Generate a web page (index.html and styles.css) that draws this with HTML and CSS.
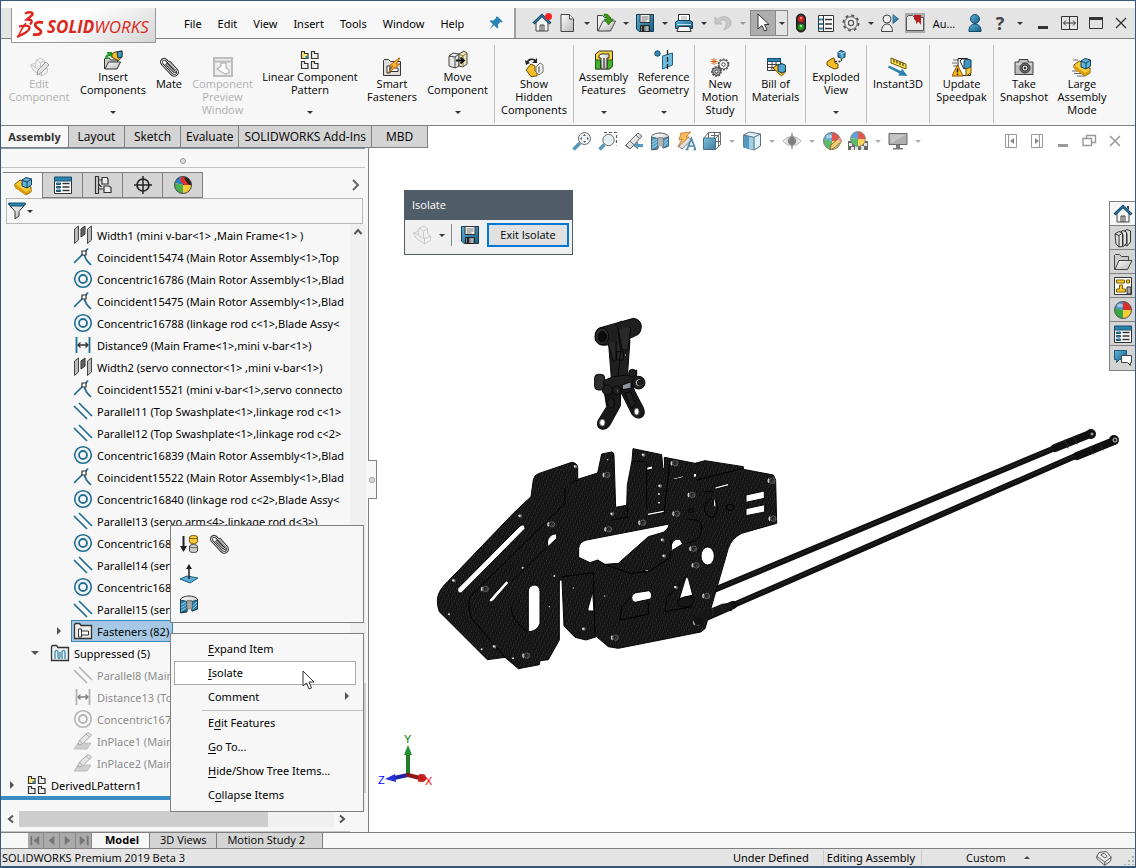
FILE: index.html
```html
<!DOCTYPE html>
<html lang="en">
<head>
    <meta charset="UTF-8">
    <meta name="viewport" content="width=device-width, initial-scale=1.0">
    <title>SOLIDWORKS Premium 2019 Beta 3</title>
    <link rel="stylesheet" href="styles.css">
</head>
<body>
    <!-- Shared icons -->
    <svg class="icon-defs" aria-hidden="true">
        <defs>
            <linearGradient id="blueGrad" x1="0" y1="0" x2="1" y2="1"><stop offset="0" stop-color="#5db4dc"/><stop offset="1" stop-color="#135b80"/></linearGradient>
            <linearGradient id="greyGrad" x1="0" y1="0" x2="1" y2="1"><stop offset="0" stop-color="#fff"/><stop offset="1" stop-color="#b5b5b5"/></linearGradient>
        </defs>
        <symbol id="home" viewBox="0 0 20 20"><path d="M4 9v9h12V9l-6-6z" fill="#f4f4f4" stroke="#444"/><path d="M8 18v-6h4v6M10 12v6" fill="none" stroke="#444"/><path d="M14 2h2v4l-2-2z" fill="#444"/><path d="M1.500 10.500 10 2.500l8.500 8" fill="none" stroke="#154a6e" stroke-width="3"/><path d="M2 10 10 2.600l8 7.400" fill="none" stroke="#348bb5" stroke-width="1"/></symbol>
        <symbol id="doc" viewBox="0 0 20 20"><path d="M4 1.500h8.500l4 4.500v12.500H4z" fill="url(#greyGrad)" stroke="#444"/><path d="M12.500 1.500V6h4" fill="#fff" stroke="#444"/></symbol>
        <symbol id="folder" viewBox="0 0 20 20"><path d="M1.500 17.500v-14l1-1h4l2 2h7v4" fill="#ccc" stroke="#444"/><path d="M2 17.500 6 8.500h13l-4.500 9z" fill="url(#greyGrad)" stroke="#444"/></symbol>
        <symbol id="open" viewBox="0 0 20 20"><path d="M1.500 18V2.500h5l2 2h6V9" fill="#eee" stroke="#444"/><path d="M2 18 7 8h12.500l-5 10z" fill="url(#greyGrad)" stroke="#444"/><path d="M8 1c5 0 6 2 6 5h3.500L12.500 12 8 6h3c0-2-1-3-3-3z" fill="#3a9a12" stroke="#1e6a06" stroke-width=".6"/></symbol>
        <symbol id="save" viewBox="0 0 20 20"><path d="M1.500 1.500h17v17H4l-2.500-2.500z" fill="url(#blueGrad)" stroke="#173c52"/><path d="M5 1.500h10v8H5z" fill="#f5f5f5" stroke="#333"/><path d="M6.500 4h7M6.500 6h7M6.500 8h5" stroke="#777"/><path d="M5.500 12.500h9v6h-9z" fill="#7f8990" stroke="#222"/><path d="M8 13v5" stroke="#222" stroke-width="2"/><path d="M12 13v5" stroke="#ddd"/></symbol>
        <symbol id="print" viewBox="0 0 20 20"><path d="M4.500 8V1.500h11V8" fill="#fff" stroke="#333"/><path d="M7 4h6M7 6h6" stroke="#aaa"/><path d="M1.500 9 4 7.500h12L18.500 9v6.500h-17z" fill="url(#blueGrad)" stroke="#143f57"/><path d="M3 11.500h14" stroke="#bde4f5"/><path d="M4.500 13.500h11l1.500 5H3z" fill="#f4f4f4" stroke="#333"/></symbol>
        <symbol id="undo" viewBox="0 0 20 20"><path d="M2 4v7h7L6.500 8.500c4-3 7-1 7 2 0 2-1 4-3 6.500 6-2 8-5 7.500-8C17 3 9 2 4.500 6.500z" fill="#c8c8c8" stroke="#aaa" stroke-width=".7"/></symbol>
        <symbol id="cursor" viewBox="0 0 20 20"><path d="M5 1v15l4-3.500L11.500 18l2.500-1-2.500-5.500H16z" fill="#fff" stroke="#333"/></symbol>
        <symbol id="traffic" viewBox="0 0 20 20"><rect x="5.500" y="1" width="9" height="18" rx="4.500" fill="#3a3030" stroke="#111"/><circle cx="10" cy="6" r="3" fill="#d8201c"/><circle cx="10" cy="14" r="3" fill="#1fa01f"/><circle cx="10" cy="5" r="1" fill="#ffb0a8"/><circle cx="10" cy="13" r="1" fill="#b6ffb0"/></symbol>
        <symbol id="list" viewBox="0 0 20 20"><path d="M2.500 2.500h15v16h-15z" fill="#fff" stroke="#333"/><path d="M7.500 2.500v16" stroke="#333"/><path d="M3 5.500h4v2H3zM3 10h4v2H3zM3 14.500h4v2H3z" fill="#2c83ad"/><path d="M9 6.500h7M9 11h7M9 15.500h7" stroke="#333" stroke-width="1.300"/></symbol>
        <symbol id="listhead" viewBox="0 0 20 20"><path d="M1.500 2.500h17v16h-17z" fill="#fff" stroke="#333"/><path d="M1.500 2h17v4h-17z" fill="#2c83ad" stroke="#15506f"/><path d="M3.500 8h4v1.500h-4zM3.500 11.500h4V13h-4zM3.500 15h4v1.500h-4z" fill="#4aa0c8" stroke="#15506f"/><path d="M9.500 8.500h7M9.500 12h7M9.500 15.500h7" stroke="#333" stroke-width="1.300"/></symbol>
        <symbol id="gear" viewBox="0 0 20 20"><circle cx="10" cy="10" r="7.600" fill="none" stroke="#555" stroke-width="1.800" stroke-dasharray="3 2.970"/><circle cx="10" cy="10" r="6.300" fill="#eee" stroke="#555"/><circle cx="10" cy="10" r="2.600" fill="none" stroke="#555" stroke-width="1.200"/></symbol>
        <symbol id="persongo" viewBox="0 0 20 20"><circle cx="7" cy="6" r="4" fill="#eee" stroke="#444"/><path d="M1.500 18.500c0-10 11-10 11 0z" fill="#eee" stroke="#444"/><path d="M13 1.500v9l5.500-4.500z" fill="url(#blueGrad)" stroke="#134b69" stroke-width=".7"/></symbol>
        <symbol id="flag" viewBox="0 0 20 20"><path d="M0 0h20v20H0z" fill="#aaa"/><path d="M1.500 17.500v-13l2-2h4l2 2h9v13z" fill="#e9e9e9" stroke="#555"/><path d="M9 2h7v10l-2.500-3.500L11 11V8L9 6z" fill="#b21c1c"/></symbol>
        <symbol id="person" viewBox="0 0 20 20"><circle cx="10" cy="6" r="4.500" fill="url(#blueGrad)" stroke="#134b69"/><path d="M4 18.500c-1-10 13-10 12 0z" fill="url(#blueGrad)" stroke="#134b69"/></symbol>
        <symbol id="pin" viewBox="0 0 20 20"><path d="m12 2 6.500 6.500-1.500.8-1.600-.4-3 3.400.4 3.600-1.300.9-4-4L1.500 18.500l4.600-6.800-3.900-3.900 1-1.300 3.500.4 3.400-3-.4-1.600z" fill="#2a83b4"/></symbol>
        <symbol id="part" viewBox="0 0 20 20"><path d="m2 8 5-4 4 1 2 5 5 1v5l-5 3-11-8z" fill="#f9cd3a" stroke="#7a5400"/><path d="m2 8 11 8v3L2 12zM13 16l5-3v3l-5 3z" fill="#dc9b0b"/><path d="m9 4 4-2.500L18.500 3v6L14 12 9 10z" fill="#63b5da" stroke="#123f58"/><path d="M9 4.200 14 6v6M14 6l4.500-3" fill="none" stroke="#123f58"/></symbol>
        <symbol id="ghostpart" viewBox="0 0 20 20"><path d="m1.500 8 5-2 1-3 4-2 4 2.500v5l3 3v4l-6 3.500L4 13z" fill="#f0f0f0" stroke="#cacaca"/><path d="m7.500 3 4 3v5l1 3v5M11.500 6l4-2.500M1.500 8l3 1 8 5 6-3M6.500 6v5" fill="none" stroke="#cacaca"/></symbol>
        <symbol id="editpart" viewBox="0 0 20 20"><use href="#ghostpart"/><path d="m8 18 1-5 8-8 3 3-8 8z" fill="#e3e3e3" stroke="#9a9a9a"/></symbol>
        <symbol id="insert" viewBox="0 0 20 20"><path d="m9 4 3-2 7-1v6l-4 4-6-4z" fill="#f3bb27" stroke="#5e4a10"/><path d="m14 2 5-1v6l-4 1z" fill="#3a97c6" stroke="#12384e"/><path d="M1.500 19V9l1-1h4l1 2h7v3" fill="#ccc" stroke="#333"/><path d="m2 19 3.500-7h12L14 19z" fill="url(#greyGrad)" stroke="#333"/><path d="M2 9c0-3 1-4 3-5L3.500 2H9v6L7 6C5 6 4 7 4 9z" fill="#1f9323"/></symbol>
        <symbol id="clip" viewBox="0 0 20 20"><path d="M7 6.500 14.500 14c1.500 1.500 3 0 1.500-1.500L7.500 3.500C4.500 0.500 0.500 4 3.500 7.500l9 9.500c3.500 3.500 8-.5 5-4.500L10 4.500" fill="none" stroke="#333" stroke-width="2.600"/><path d="M7 6.500 14.500 14c1.500 1.500 3 0 1.500-1.500L7.500 3.500C4.500 0.500 0.500 4 3.500 7.500l9 9.500c3.500 3.500 8-.5 5-4.500L10 4.500" fill="none" stroke="#eee" stroke-width="1"/></symbol>
        <symbol id="preview" viewBox="0 0 20 20"><path d="M1 1h18v18H1z" fill="#eee" stroke="#bdbdbd" stroke-width="2"/><path d="M1 4.500h18" stroke="#bdbdbd" stroke-width="2"/><path d="m4 12 4-3V6h5v5l3 2v3l-4 1z" fill="#fff" stroke="#bbb" stroke-width="1.300"/></symbol>
        <symbol id="pattern" viewBox="0 0 20 20"><g stroke="#333" stroke-width="1.200"><path d="M1.500 1.500h3v2h3.500v5H1.500z" fill="#ffe27a"/><g fill="#eee"><path d="M11.500 1.500h3v2H18v5h-6.500zM1.500 11.500h3v2h3.500v5H1.500zM11.500 11.500h3v2H18v5h-6.500z"/></g></g><path d="M5.500 6H8v2.500H5.500z" fill="#2c83ad"/></symbol>
        <symbol id="smart" viewBox="0 0 20 20"><path d="M1.500 18.500V3.500l1-1h4l2 2h10v14z" fill="#ddd" stroke="#333"/><path d="M5 9h3v7H5zM8 11h8v3.500H8z" fill="#fff" stroke="#333"/><path d="M17 1 7 9h4l-5 7L18 7h-4l4-6z" fill="#f9b32d" stroke="#a64d05" stroke-width=".8"/></symbol>
        <symbol id="move" viewBox="0 0 20 20"><path d="m1 6 4-3 6 1v12l-4 2-6-2z" fill="#e5e5e5" stroke="#444"/><path d="m1 6 6 1v11M7 7l4-3" fill="none" stroke="#444"/><path d="m11 4 5-3 3 2v11l-4 3-4-1z" fill="#ece3b8" stroke="#444"/><path d="m11 4 4 2v10M15 6l4-3" fill="none" stroke="#8a7432"/><path d="M8 10.500h7M12.500 7.500l3.500 3-3.500 3" fill="none" stroke="#111" stroke-width="1.800"/></symbol>
        <symbol id="show" viewBox="0 0 20 20"><path d="m2 13 5-6 4 2v5l2 1v4l-6 .5z" fill="#f5bd28" stroke="#6f4c00"/><path d="m12 10 4-4 3 2v7l-4 3-3-3z" fill="#eee" stroke="#777"/><path d="m14 10 2-1v6l-2 1z" fill="#999"/><path d="M3 6c1-4 6-5 9-2" fill="none" stroke="#222" stroke-width="1.600"/><path d="m1 3 1 5 4-2zM13 1v5H8z" fill="#222"/></symbol>
        <symbol id="asmfeat" viewBox="0 0 20 20"><path d="m1.500 4 4-3h13v15l-3 3h-14z" fill="#f6cf3b" stroke="#333"/><path d="M1.500 10h5v9h-5zM13 10h5.500v6l-3 3H13z" fill="#3fb52c" stroke="#265c1b"/><path d="M5 5.500 7 4h8v4h-2v11H7V8H5z" fill="url(#greyGrad)" stroke="#333"/><path d="M10 8v11" stroke="#777" stroke-width="2"/></symbol>
        <symbol id="refgeo" viewBox="0 0 20 20"><circle cx="3.500" cy="3.500" r="2.700" fill="#348bb5" stroke="#144c6b"/><path d="m8.500 6 10-3v12l-10 4z" fill="#70bbdc" stroke="#1b6287"/><path d="M13.500 0v20" stroke="#222" stroke-width="1.300" stroke-dasharray="5 2"/></symbol>
        <symbol id="motion" viewBox="0 0 20 20"><circle cx="13.500" cy="7.500" r="5.200" fill="none" stroke="#555" stroke-width="1.500" stroke-dasharray="2 1.270"/><circle cx="13.500" cy="7.500" r="4.500" fill="#eee" stroke="#555"/><circle cx="13.500" cy="7.500" r="1.700" fill="#fff" stroke="#555"/><circle cx="6.500" cy="14.500" r="4.600" fill="none" stroke="#444" stroke-width="1.500" stroke-dasharray="2 1.200"/><circle cx="6.500" cy="14.500" r="4" fill="#aaa" stroke="#444"/><circle cx="6.500" cy="14.500" r="1.500" fill="#fff" stroke="#444"/><path d="M4 1v7M.5 4.500h7M1.500 2l5 5M6.500 2l-5 5" stroke="#d8681a"/></symbol>
        <symbol id="bom" viewBox="0 0 20 20"><path d="M1.500 1.500h13v12h-13z" fill="#fff" stroke="#333"/><path d="M1.500 1.500h13v3h-13z" fill="#2c83ad" stroke="#15506f"/><path d="M2 7.500h12M2 10.500h12M6 4.500v9M10 4.500v9" stroke="#444"/><path d="m7 11 4-3 5-1 3.500 1.500V15l-4 4z" fill="#f5bd28" stroke="#6f4c00"/><path d="m12 8 4-1.500 3.500 2V14L16 16l-4-2z" fill="#4da6d0" stroke="#123f58"/></symbol>
        <symbol id="explode" viewBox="0 0 20 20"><path d="m1 12 4-3 3-1 1 5 3 1v4l-4 1-7-4z" fill="#f5bd28" stroke="#6f4c00"/><path d="m12 2 3-1.500L19 2v5l-3 1.500L12 7z" fill="#348bb5" stroke="#123f58"/><path d="m12 2 4 1.500v5M16 3.500 19 2" fill="none" stroke="#b9e3f7"/><path d="M9 11.500h6.500V8" fill="none" stroke="#222" stroke-width="1.300" stroke-dasharray="2 1.500"/></symbol>
        <symbol id="instant" viewBox="0 0 20 20"><path d="m3 1 15 6v5L3 6z" fill="#fae04a" stroke="#705c0c"/><path d="M6 2.500v3M9 3.500v3M12 5v3M15 6v3" stroke="#222"/><path d="M1 8.500 13 14l1-2.500 5.500 7.500-9.500-.500 1.500-2L0 10.500z" fill="#2c83ad"/></symbol>
        <symbol id="update" viewBox="0 0 20 20"><path d="M1 3h5M0 6h5M1 9h4" stroke="#666"/><path d="M6 1.500h9l3.500 2v15h-9L6 16z" fill="#fff" stroke="#222"/><path d="m8 4 2-2h4v7l-2 3z" fill="#fff" stroke="#222"/><path d="m12 4 3-2 4 1v7l-5 2-2-1z" fill="#3f96c0" stroke="#123f58"/><path d="m14 12 5-2v6l-5 3z" fill="#f3ce49" stroke="#6f4c00"/><path d="m5.500 8 5.500 11H0z" fill="#ffc21a" stroke="#8d4a00"/><path d="M5.500 11.500v4M5.500 16.500V18" stroke="#222" stroke-width="1.600"/></symbol>
        <symbol id="camera" viewBox="0 0 20 20"><path d="M1 5h4V2.500h9V5h5v12.500H1z" fill="#bdbdbd" stroke="#444"/><path d="M2 7h16" stroke="#eee"/><circle cx="11" cy="11" r="5" fill="#777" stroke="#333"/><circle cx="11" cy="11" r="3" fill="#eee" stroke="#222"/><circle cx="11" cy="11" r="1.300" fill="#333"/></symbol>
        <symbol id="large" viewBox="0 0 20 20"><path d="M0 14h8M2 16.500h8M5 19h8M1 3h5" stroke="#666"/><use href="#part"/></symbol>
        <symbol id="zoomfit" viewBox="0 0 20 20"><path d="m1.500 18.500 6.500-6.500" stroke="#2f7fa8" stroke-width="3.500"/><circle cx="12.500" cy="7.500" r="6" fill="#edf3f6" stroke="#444"/><path d="m12.500 3-1.500 2h3zM12.500 12 11 10h3zM8 7.500 10 6v3zM17 7.500 15 6v3z" fill="#333"/></symbol>
        <symbol id="zoomarea" viewBox="0 0 20 20"><path d="M6 1.500h12.500v13" fill="none" stroke="#333" stroke-width="1.200" stroke-dasharray="3 2"/><path d="m1.500 18.500 5-5" stroke="#2f7fa8" stroke-width="3.500"/><circle cx="10.500" cy="9" r="5.700" fill="#dde9ef" stroke="#444"/></symbol>
        <symbol id="prevview" viewBox="0 0 20 20"><path d="m1.500 14.500 5-5L14 2l4 3-7 8-5 5z" fill="url(#greyGrad)" stroke="#444"/><path d="m2 14 4 4M6 10l4 4M12 4l3.500 3.500" stroke="#444"/><path d="M19 13v3h-5v2.500l-5-4 5-4V13z" fill="#2c83ad"/></symbol>
        <symbol id="section" viewBox="0 0 20 20"><path d="M1.500 5C5 1 15 1 18.500 5v10L13 17V7H8v11l-6.500 1z" fill="url(#greyGrad)" stroke="#333"/><path d="M1.500 6 8 7.500V17l-6.500 1.500zM13 7.500 18.500 6v9L13 17z" fill="#2c83ad" stroke="#163e54"/><path d="m2 11 5-3M2 14l5.500-3.500M2 17l5.500-3.500M13.500 12l4.500-4M13.500 15l4.500-4" stroke="#8fd0ee"/><path d="M8 7h5v8H8z" fill="#a5a5a5" stroke="#666" stroke-width=".5"/></symbol>
        <symbol id="annot" viewBox="0 0 20 20"><path d="M2 15 12 6l4 3L6 18z" fill="url(#greyGrad)" stroke="#555"/><path d="M15 1 5 2 3 9l3-1-4 8L13 6h-3z" fill="#f7ab2d" stroke="#a64d05" stroke-width=".8"/><path d="m11 18.500 4.500-11 4 11M12.500 15h6M9.500 18.500h3M17.500 18.500h3" fill="none" stroke="#1f6e96" stroke-width="1.700"/></symbol>
        <symbol id="views" viewBox="0 0 20 20"><path d="M6.500 1.500h12V14M6.500 1.500V7M12.500 1.500V7M2 7l4.500-5.500M14 7l4.500-5.500M14 10.500h4.500M14 18l4.500-4.500M9 4.500h7.500v11" fill="none" stroke="#444"/><path d="M1.500 7h12v11.500h-12z" fill="url(#blueGrad)" stroke="#184e69"/></symbol>
        <symbol id="shaded" viewBox="0 0 20 20"><path d="m1.500 4 6-3L18.500 3v12L12 19 1.500 16z" fill="#d9eef8" stroke="#2c4f61"/><path d="m1.500 4 6 1.500v12.500L1.500 16z" fill="#2c83ad"/><path d="m7.500 5.500 5 .8V19l-5-1z" fill="#8bc6e2"/><path d="M1.500 4 12 6.300V19M12 6.300 18.500 3" fill="none" stroke="#2c4f61"/></symbol>
        <symbol id="eye" viewBox="0 0 20 20"><path d="M1 10c4-6 14-6 18 0-4 6-14 6-18 0z" fill="#e0e0e0" stroke="#aaa"/><circle cx="10" cy="10" r="4.300" fill="#666"/><path d="M10 2v16" stroke="#555" stroke-width="1.200"/></symbol>
        <symbol id="ball" viewBox="0 0 20 20"><path d="M10 10V1.500A8.500 8.500 0 0 0 2 8z" fill="#3b8cd0"/><path d="M10 10V1.500A8.500 8.500 0 0 1 18.500 10z" fill="#db2f25"/><path d="M10 10h8.500A8.500 8.500 0 0 1 10 18.500z" fill="#f7cc34"/><path d="M10 10 2 8a8.500 8.500 0 0 0 8 10.500z" fill="#37a746"/><circle cx="10" cy="10" r="8.500" fill="none" stroke="#565656"/><ellipse cx="7" cy="5.500" rx="3" ry="2" fill="#fff" opacity=".5"/></symbol>
        <symbol id="display" viewBox="0 0 20 20"><path d="M10 10 2 8a8.500 8.500 0 0 1 8-6.500z" fill="#2b7fca"/><path d="M10 10V1.500A8.500 8.500 0 0 1 18.500 10z" fill="#222"/><path d="m2 8 8 2 8.500 0A8.500 8.500 0 0 1 11 18.500z" fill="#f7cc34"/><path d="M10 10 2 8a8.500 8.500 0 0 0 8 10.500z" fill="#4caf50"/><circle cx="10" cy="10" r="8.500" fill="none" stroke="#444"/><path d="M8 2c3-1 5 1 6 3l2 5h-5L7 6z" fill="#d8342a"/><path d="M11 3c3 0 5 2 6 5l-2 1z" fill="#222"/></symbol>
        <symbol id="ballpencil" viewBox="0 0 20 20"><use href="#ball"/><path d="m8 19 1-5 8-7 3 3-8 7z" fill="#f3c75a" stroke="#70460a"/><path d="m16 8 1.500-1.500 3 2.500-1.500 2z" fill="#e07c84"/></symbol>
        <symbol id="scene" viewBox="0 0 20 20"><path d="M0 10h20v9H0z" fill="#444"/><path d="M1 12h3v3H1zM7 15h3v4H7zM13 15h3v4h-3zM16 12h3v3h-3zM3 16h3v3H3z" fill="#ddd"/><path d="M10 8V.5A7.500 7.500 0 0 0 2.500 7z" fill="#3b8cd0"/><path d="M10 8V.5A7.500 7.500 0 0 1 17.500 8z" fill="#db2f25"/><path d="M10 8h7.500a7.500 7.500 0 0 1-7.500 7.500z" fill="#f7cc34"/><path d="M10 8 2.500 7A7.500 7.500 0 0 0 10 15.500z" fill="#37a746"/><circle cx="10" cy="8" r="7.500" fill="none" stroke="#565656" stroke-width=".7"/></symbol>
        <symbol id="monitor" viewBox="0 0 20 20"><path d="M1 2.500h18v11H1z" fill="#9a9a9a" stroke="#444"/><path d="M2 3.500h16L3 12.500z" fill="#b9b9b9"/><path d="M8 14h4v3h3v1.500H5V17h3z" fill="#555"/></symbol>
        <symbol id="tree" viewBox="0 0 20 20"><path d="M2.500 1.500v17h3v-17zM5.500 5h4M5.500 14h5M5.500 9l3 3" fill="none" stroke="#333" stroke-width="1.200"/><path d="M9 2.500h5l1 1.500v5H9zM11 11h5l2 1.500v5h-7z" fill="#eee" stroke="#333" stroke-width="1.200"/></symbol>
        <symbol id="target" viewBox="0 0 20 20"><circle cx="10" cy="10" r="6" fill="none" stroke="#222" stroke-width="1.700"/><path d="M10 1v18M1 10h18" stroke="#222" stroke-width="1.500"/></symbol>
        <symbol id="books" viewBox="0 0 20 20"><g fill="#e2e2e2" stroke="#333"><path d="m10 4 4-2.500L17.500 3v11L14 18l-4-2z"/><path d="m6 5 4-2.500L13.500 4v11l-3 3.500L6 16z"/><path d="m2 6 4-2.500L9.500 5v13.500L6 19l-3-3z"/></g><path d="m2 6 4 1.500V19M6 7.500 9.500 5M10 6.500v11M14 5.500V17" fill="none" stroke="#333"/></symbol>
        <symbol id="palette" viewBox="0 0 20 20"><path d="M1.500 1.500h17v17h-17z" fill="#fff" stroke="#333"/><path d="M3.500 4h8v3h-8zM13.500 4h3v3h-3zM6.500 9h3v4h3v3h-9v-3h3z" fill="#ffcc27" stroke="#7a5b05"/><path d="M14 11h4v7h-4z" fill="#aaa" stroke="#333"/></symbol>
        <symbol id="chat" viewBox="0 0 20 20"><path d="M1.500 2.500h12v9h-7l-3 3v-3h-2z" fill="url(#blueGrad)" stroke="#235a76"/><path d="M8.500 7.500h10v7h-1v3l-3-3h-6z" fill="#fff" stroke="#444"/></symbol>
        <symbol id="filter" viewBox="0 0 20 20"><path d="M1.500 3 8 10.500V18l4-3v-4.500L18.500 3z" fill="url(#greyGrad)" stroke="#333"/><path d="M1.500 2h17l-2 3h-13z" fill="#2c83ad" stroke="#15506f"/></symbol>
        <symbol id="width" viewBox="0 0 20 20"><path d="m1.500 4 4-3v14l-4 3.500zM14.500 4l4-3v14l-4 3.500z" fill="#bbb" stroke="#444"/><path d="m8 4 4-3v8l-4 3z" fill="#666" stroke="#333"/></symbol>
        <symbol id="coin" viewBox="0 0 20 20"><path d="M1 16 11 6l4-4.500M11 6c1 6 3 8 7 12" fill="none" stroke="#1f6e96" stroke-width="1.700"/><path d="M9 4h4v4H9z" fill="#fff" stroke="#333" stroke-width="1.200"/></symbol>
        <symbol id="conc" viewBox="0 0 20 20"><circle cx="10" cy="10" r="8.300" fill="none" stroke="currentColor" stroke-width="1.600"/><circle cx="10" cy="10" r="4" fill="none" stroke="currentColor" stroke-width="1.800"/></symbol>
        <symbol id="par" viewBox="0 0 20 20"><path d="m1 5 13 13M6 2l13 13" stroke="currentColor" stroke-width="1.700"/></symbol>
        <symbol id="dist" viewBox="0 0 20 20"><path d="M3.500 2v16M16.500 2v16" stroke="currentColor" stroke-width="1.800"/><path d="M5 10h10M7.500 7.500 5 10l2.500 2.500M12.500 7.500 15 10l-2.500 2.500" fill="none" stroke="#333" stroke-width="1.300"/></symbol>
        <symbol id="inplace" viewBox="0 0 20 20"><path d="m1 18 4-6h13l-4 6z" fill="#b5b5b5" stroke="#999"/><path d="m5 14 1.500-5L15 1.500 18.500 4 9.500 13z" fill="#ddd" stroke="#777"/><path d="m6.500 9 3 4M13 3l3.500 3" stroke="#777"/></symbol>
        <symbol id="fast" viewBox="0 0 20 20"><path d="M1.500 17.500v-14l1-1h4l1.500 2h10.500v13z" fill="#eee" stroke="#333" stroke-width="1.300"/><path d="M5.500 8h3v8h-3zM8.500 10h7v4h-7z" fill="#fff" stroke="#333"/></symbol>
        <symbol id="supp" viewBox="0 0 20 20"><path d="M1.500 17.500v-14l1-1h4l1.500 2h10.500v13z" fill="#eee" stroke="#333" stroke-width="1.300"/><path d="M5 16V9c0-2 3-2 3 0v5c0 2 2 2 2 0M12 16V9c0-2 3-2 3 0v7M10 14V9" fill="none" stroke="#2c83ad" stroke-width="1.200"/></symbol>
        <symbol id="suppress" viewBox="0 0 20 20"><path d="M4.500 2v14" stroke="#222" stroke-width="2"/><path d="M1 12h7l-3.500 6z" fill="#222"/><path d="M10.500 3c1-2 7-2 8 0v5c-1 2-7 2-8 0z" fill="#f7cc34" stroke="#7a5400"/><path d="M10.500 12c1-2 7-2 8 0v5c-1 2-7 2-8 0z" fill="#ccc" stroke="#444"/><path d="M11 4c2 1 5 1 7 0M11 13c2 1 5 1 7 0" fill="none" stroke="#6b5a2a"/></symbol>
        <symbol id="normal" viewBox="0 0 20 20"><path d="m1 15 7-3 11 2-8 5z" fill="#5baed5" stroke="#1c597a"/><path d="M10 3v12" stroke="#222" stroke-width="1.500"/><path d="m10 0 3 5H7z" fill="#222"/></symbol>
        <symbol id="tag" viewBox="0 0 20 20"><path d="m1 8 3-5 9-1 6 7-1 5-7 5L1 11z" fill="#eee" stroke="#333"/><path d="m1 8 10 7 8-6M11 15v4M6 6l4-2 4 4-3 2z" fill="none" stroke="#333"/></symbol>
    </svg>

    <header class="titlebar">
        <a class="brand" href="#" aria-label="SOLIDWORKS">
            <svg class="brand-mark" viewBox="0 0 28 28" fill="none" stroke="#da291c"><path d="M9 2.500C15 0 19 2 15 5l-4 3.500c5 0 6 2 3 5" stroke-width="2.400"/><path d="M10 12C6 17 4 21 2 26" stroke-width="1.600"/><path d="M3 15.500c14-3 15 3-2 10.500" stroke-width="2.300"/><path d="M27 11.500c-9-1.500-10 3-4 6.500 4 3 2 6.500-6 5.500" stroke-width="2.800"/></svg>
            <span class="brand-name"><b>SOLID</b>WORKS</span>
        </a>
        <nav class="menubar" aria-label="Main menu">
            <button>File</button><button>Edit</button><button>View</button><button>Insert</button><button>Tools</button><button>Window</button><button>Help</button>
            <button class="pin" aria-label="Pin menu"><svg class="icon"><use href="#pin"/></svg></button>
        </nav>
        <div class="quickbar">
            <button class="home-button" aria-label="Home"><svg class="icon"><use href="#home"/></svg><i class="dot"></i></button>
            <button aria-label="New"><svg class="icon"><use href="#doc"/></svg></button><button class="drop" aria-label="New options"></button>
            <button aria-label="Open"><svg class="icon"><use href="#open"/></svg></button><button class="drop" aria-label="Open options"></button>
            <button aria-label="Save"><svg class="icon"><use href="#save"/></svg></button><button class="drop" aria-label="Save options"></button>
            <button aria-label="Print"><svg class="icon"><use href="#print"/></svg></button><button class="drop" aria-label="Print options"></button>
            <button aria-label="Undo"><svg class="icon"><use href="#undo"/></svg></button><button class="drop faded" aria-label="Undo options"></button>
            <div class="select-tool"><button aria-label="Select"><svg class="icon"><use href="#cursor"/></svg></button><button class="drop" aria-label="Select options"></button></div>
            <button aria-label="Rebuild"><svg class="icon"><use href="#traffic"/></svg></button>
            <button aria-label="File properties"><svg class="icon"><use href="#list"/></svg></button>
            <button aria-label="Options"><svg class="icon"><use href="#gear"/></svg></button><button class="drop" aria-label="More options"></button>
            <button aria-label="User preview"><svg class="icon"><use href="#persongo"/></svg></button>
            <button aria-label="Bookmark"><svg class="icon"><use href="#flag"/></svg></button>
            <button class="search-text">Au...</button>
            <button aria-label="Login"><svg class="icon"><use href="#person"/></svg></button>
            <button class="help">?</button><button class="drop" aria-label="Help options"></button>
            <div class="window-buttons">
                <button aria-label="Minimize"><svg class="icon" viewBox="0 0 20 20"><path d="M5 14.500h10" stroke="#333" stroke-width="3"/></svg></button>
                <button aria-label="Span displays"><svg class="icon" viewBox="0 0 20 20"><path d="M2.500 3.500h16v13h-16zM10.500 4v12M4.500 10h12M7 7.500 4.500 10 7 12.500M14 7.500l2.500 2.500-2.500 2.500" fill="none" stroke="#333"/></svg></button>
                <button aria-label="Maximize"><svg class="icon" viewBox="0 0 20 20"><path d="M4.500 4.500h13v11h-13z" fill="none" stroke="#333"/><path d="M4 4h14v3H4z" fill="#333"/></svg></button>
                <button aria-label="Close"><svg class="icon" viewBox="0 0 20 20"><path d="m5 5 10 10M15 5 5 15" stroke="#333" stroke-width="1.300"/></svg></button>
            </div>
        </div>
    </header>

    <section class="ribbon" aria-label="Assembly commands">
        <button disabled><svg class="icon"><use href="#editpart"/></svg>Edit<br>Component</button>
        <button class="has-drop"><svg class="icon"><use href="#insert"/></svg>Insert<br>Components</button>
        <button><svg class="icon"><use href="#clip"/></svg>Mate</button>
        <button disabled><svg class="icon"><use href="#preview"/></svg>Component<br>Preview<br>Window</button>
        <button class="has-drop"><svg class="icon"><use href="#pattern"/></svg>Linear Component<br>Pattern</button>
        <button><svg class="icon"><use href="#smart"/></svg>Smart<br>Fasteners</button>
        <button class="has-drop group-end"><svg class="icon"><use href="#move"/></svg>Move<br>Component</button>
        <button class="group-end"><svg class="icon"><use href="#show"/></svg>Show<br>Hidden<br>Components</button>
        <button class="has-drop"><svg class="icon"><use href="#asmfeat"/></svg>Assembly<br>Features</button>
        <button class="has-drop group-end"><svg class="icon"><use href="#refgeo"/></svg>Reference<br>Geometry</button>
        <button class="group-end"><svg class="icon"><use href="#motion"/></svg>New<br>Motion<br>Study</button>
        <button class="group-end"><svg class="icon"><use href="#bom"/></svg>Bill of<br>Materials</button>
        <button class="has-drop group-end"><svg class="icon"><use href="#explode"/></svg>Exploded<br>View</button>
        <button class="group-end"><svg class="icon"><use href="#instant"/></svg>Instant3D</button>
        <button class="group-end"><svg class="icon"><use href="#update"/></svg>Update<br>Speedpak</button>
        <button><svg class="icon"><use href="#camera"/></svg>Take<br>Snapshot</button>
        <button><svg class="icon"><use href="#large"/></svg>Large<br>Assembly<br>Mode</button>
    </section>

    <div class="tab-row">
        <nav class="command-tabs" aria-label="Command tabs">
            <button class="active">Assembly</button><button>Layout</button><button>Sketch</button><button>Evaluate</button><button>SOLIDWORKS Add-Ins</button><button>MBD</button>
        </nav>
        <div class="view-toolbar">
            <button aria-label="Zoom to fit"><svg class="icon"><use href="#zoomfit"/></svg></button>
            <button aria-label="Zoom to area"><svg class="icon"><use href="#zoomarea"/></svg></button>
            <button aria-label="Previous view"><svg class="icon"><use href="#prevview"/></svg></button>
            <button aria-label="Section view"><svg class="icon"><use href="#section"/></svg></button>
            <button aria-label="Dynamic annotation views"><svg class="icon"><use href="#annot"/></svg></button>
            <button aria-label="View orientation"><svg class="icon"><use href="#views"/></svg></button><button class="drop" aria-label="Orientations"></button>
            <button aria-label="Display style"><svg class="icon"><use href="#shaded"/></svg></button><button class="drop" aria-label="Display styles"></button>
            <button aria-label="Hide or show items"><svg class="icon"><use href="#eye"/></svg></button><button class="drop" aria-label="Item types"></button>
            <button aria-label="Edit appearance"><svg class="icon"><use href="#ballpencil"/></svg></button>
            <button aria-label="Apply scene"><svg class="icon"><use href="#scene"/></svg></button><button class="drop" aria-label="Scenes"></button>
            <button aria-label="View settings"><svg class="icon"><use href="#monitor"/></svg></button><button class="drop" aria-label="Settings"></button>
        </div>
        <div class="doc-buttons">
            <button aria-label="Previous pane"><svg class="icon" viewBox="0 0 20 20"><path d="M4.500 3.500h11v13h-11zM7.500 4v12" fill="none" stroke="#999"/><path d="M13 7v6l-4-3z" fill="#888"/></svg></button>
            <button aria-label="Next pane"><svg class="icon" viewBox="0 0 20 20"><path d="M4.500 3.500h11v13h-11zM12.500 4v12" fill="none" stroke="#999"/><path d="M8 7v6l4-3z" fill="#888"/></svg></button>
            <button aria-label="Minimize document"><svg class="icon" viewBox="0 0 20 20"><path d="M5 14.500h10" stroke="#999" stroke-width="3"/></svg></button>
            <button aria-label="Restore document"><svg class="icon" viewBox="0 0 20 20"><path d="M4 7.500h8.500v7H4zM7.500 7V4.500h9v7H13" fill="none" stroke="#999" stroke-width="1.400"/></svg></button>
            <button aria-label="Close document"><svg class="icon" viewBox="0 0 20 20"><path d="m5 5 10 10M15 5 5 15" stroke="#999" stroke-width="1.500"/></svg></button>
        </div>
    </div>

    <main class="workspace">
        <aside class="manager">
            <div class="grip"><i></i></div>
            <nav class="manager-tabs" aria-label="Manager tabs">
                <button class="active" aria-label="Feature tree"><svg class="icon"><use href="#part"/></svg></button>
                <button aria-label="Properties"><svg class="icon"><use href="#listhead"/></svg></button>
                <button aria-label="Configurations"><svg class="icon"><use href="#tree"/></svg></button>
                <button aria-label="DimXpert"><svg class="icon"><use href="#target"/></svg></button>
                <button aria-label="Display manager"><svg class="icon"><use href="#display"/></svg></button>
                <button class="more" aria-label="More tabs"><svg class="icon" viewBox="0 0 20 20"><path d="m8 5 5 5-5 5" fill="none" stroke="#666" stroke-width="2"/></svg></button>
            </nav>
            <div class="filter">
                <button aria-label="Filter"><svg class="icon"><use href="#filter"/></svg></button><button class="drop" aria-label="Filter options"></button>
                <input type="text" aria-label="Filter tree">
            </div>
            <div class="tree-area">
                <ul class="tree">
                    <li><svg class="icon"><use href="#width"/></svg><span>Width1 (mini v-bar&lt;1&gt; ,Main Frame&lt;1&gt; )</span></li>
                    <li><svg class="icon"><use href="#coin"/></svg><span>Coincident15474 (Main Rotor Assembly&lt;1&gt;,Top</span></li>
                    <li><svg class="icon"><use href="#conc"/></svg><span>Concentric16786 (Main Rotor Assembly&lt;1&gt;,Blad</span></li>
                    <li><svg class="icon"><use href="#coin"/></svg><span>Coincident15475 (Main Rotor Assembly&lt;1&gt;,Blad</span></li>
                    <li><svg class="icon"><use href="#conc"/></svg><span>Concentric16788 (linkage rod c&lt;1&gt;,Blade Assy&lt;</span></li>
                    <li><svg class="icon"><use href="#dist"/></svg><span>Distance9 (Main Frame&lt;1&gt;,mini v-bar&lt;1&gt;)</span></li>
                    <li><svg class="icon"><use href="#width"/></svg><span>Width2 (servo connector&lt;1&gt; ,mini v-bar&lt;1&gt;)</span></li>
                    <li><svg class="icon"><use href="#coin"/></svg><span>Coincident15521 (mini v-bar&lt;1&gt;,servo connecto</span></li>
                    <li><svg class="icon"><use href="#par"/></svg><span>Parallel11 (Top Swashplate&lt;1&gt;,linkage rod c&lt;1&gt;</span></li>
                    <li><svg class="icon"><use href="#par"/></svg><span>Parallel12 (Top Swashplate&lt;1&gt;,linkage rod c&lt;2&gt;</span></li>
                    <li><svg class="icon"><use href="#conc"/></svg><span>Concentric16839 (Main Rotor Assembly&lt;1&gt;,Blad</span></li>
                    <li><svg class="icon"><use href="#coin"/></svg><span>Coincident15522 (Main Rotor Assembly&lt;1&gt;,Blad</span></li>
                    <li><svg class="icon"><use href="#conc"/></svg><span>Concentric16840 (linkage rod c&lt;2&gt;,Blade Assy&lt;</span></li>
                    <li><svg class="icon"><use href="#par"/></svg><span>Parallel13 (servo arm&lt;4&gt;,linkage rod d&lt;3&gt;)</span></li>
                    <li><svg class="icon"><use href="#conc"/></svg><span>Concentric168</span></li>
                    <li><svg class="icon"><use href="#par"/></svg><span>Parallel14 (serv</span></li>
                    <li><svg class="icon"><use href="#conc"/></svg><span>Concentric168</span></li>
                    <li><svg class="icon"><use href="#par"/></svg><span>Parallel15 (serv</span></li>
                    <li class="folder-row"><i class="caret"></i><span class="selected"><svg class="icon"><use href="#fast"/></svg>Fasteners (82)</span></li>
                    <li class="level-1"><i class="caret open"></i><svg class="icon"><use href="#supp"/></svg><span>Suppressed (5)</span></li>
                    <li class="off"><svg class="icon"><use href="#par"/></svg><span>Parallel8 (Main</span></li>
                    <li class="off"><svg class="icon"><use href="#dist"/></svg><span>Distance13 (To</span></li>
                    <li class="off"><svg class="icon"><use href="#conc"/></svg><span>Concentric167</span></li>
                    <li class="off"><svg class="icon"><use href="#inplace"/></svg><span>InPlace1 (Main</span></li>
                    <li class="off"><svg class="icon"><use href="#inplace"/></svg><span>InPlace2 (Main</span></li>
                    <li class="level-0"><i class="caret"></i><svg class="icon"><use href="#pattern"/></svg><span>DerivedLPattern1</span></li>
                    <li class="rollback"></li>
                </ul>
                <div class="vscroll">
                    <svg class="scroll-arrow" viewBox="0 0 16 16"><path d="m4.500 10 3.500-4 3.500 4" fill="none" stroke="#555" stroke-width="2"/></svg>
                    <i class="vthumb"></i>
                </div>
            </div>
            <div class="hscroll">
                <svg class="scroll-arrow" viewBox="0 0 16 16"><path d="M10 4.500 6 8l4 3.500" fill="none" stroke="#555" stroke-width="2"/></svg>
                <div class="htrack"><i class="hthumb"></i></div>
                <svg class="scroll-arrow" viewBox="0 0 16 16"><path d="m6 4.500 4 3.500-4 3.500" fill="none" stroke="#555" stroke-width="2"/></svg>
            </div>
            <button class="splitter" aria-label="Collapse panel"><i></i></button>

            <!-- Menus opened on the Fasteners folder -->
            <div class="popup-tools">
                <div><button aria-label="Suppress"><svg class="icon"><use href="#suppress"/></svg></button><button aria-label="Mate"><svg class="icon"><use href="#clip"/></svg></button></div>
                <div><button aria-label="Normal to"><svg class="icon"><use href="#normal"/></svg></button></div>
                <div><button aria-label="Section view"><svg class="icon"><use href="#section"/></svg></button></div>
            </div>
            <div class="context-menu" role="menu">
                <button role="menuitem"><span><u>E</u>xpand Item</span></button>
                <button role="menuitem" class="hover"><span><u>I</u>solate</span></button>
                <button role="menuitem"><span>Comment</span><i class="caret"></i></button>
                <hr>
                <button role="menuitem"><span>E<u>d</u>it Features</span></button>
                <button role="menuitem"><span><u>G</u>o To...</span></button>
                <button role="menuitem"><span><u>H</u>ide/Show Tree Items...</span></button>
                <button role="menuitem"><span>C<u>o</u>llapse Items</span></button>
                <svg class="pointer" viewBox="0 0 14 20"><path d="M1 1v15l3.500-3 2.500 6 2.500-1L7 12h5z" fill="#fff" stroke="#333"/></svg>
            </div>
        </aside>

        <section class="viewport">
            <svg class="model" viewBox="369 148 766 684" role="img" aria-label="Isolated helicopter frame">
                <defs>
                    <pattern id="carbon" width="14" height="18" patternUnits="userSpaceOnUse" patternTransform="rotate(-10)"><rect width="14" height="18" fill="#0b0b0b"/><path d="m1 8 4-7M8 17l4-7" stroke="#353535" stroke-width="3"/><path d="m8 8 4-7M1 17l4-7" stroke="#242424" stroke-width="3"/></pattern>
                    <g id="screw"><circle r="8" fill="#161616" stroke="#8d8985" stroke-width="2"/><path d="M-10-6q-5 7 0 12" fill="none" stroke="#d8d0c9" stroke-width="4"/><circle cx="2" cy="1" r="3" fill="#111" stroke="#aaa"/></g>
                    <g id="bolt"><circle r="5" fill="#777"/><circle cx="-3" cy="-1" r="3" fill="#eee"/></g>
                </defs>
                <!-- tail boom rods -->
                <g stroke="#101010" stroke-linecap="round" fill="none">
                    <path d="M714 590 1055 448M697 621 1080 454" stroke-width="6"/>
                    <path d="M1055 448 1090 434M1077 456 1114 441M699 620 733 605" stroke-width="8"/>
                    <path d="M716 589 1052 449M737 603 1074 456" stroke="#262626" stroke-width="1"/>
                    <path d="m1065 440 3 8m6-11 3 7M1090 447l3 7m7-10 3 6" stroke="#2a2a2a" stroke-width="1"/>
                </g>
                <g transform="translate(430 430) scale(.333333)">
                    <path fill="url(#carbon)" stroke="#050505" stroke-width="3" stroke-linejoin="round" fill-rule="evenodd" d="M22 512C22 485 42 465 60 448L250 250L303 200L310 150Q312 136 325 131L425 97Q441 98 443 112V148L503 129L515 72L545 66Q553 68 552 76L557 232L590 226L592 165L606 92L609 56L695 74L699 115L704 118L703 82L795 100L825 92L940 110V118L1030 135L1037 150L1040 280L935 310Q905 325 895 355L840 545L825 596L812 606L565 655L535 650L500 620L468 630L435 622L402 588L396 450H388V630L355 689L330 692L328 704L265 716L225 682L172 689L28 545Q22 530 22 512Z
                    M83 476L270 288Q284 278 285 296L95 488Q82 492 83 476Z M177 510L229 452L236 459L190 512Q178 520 177 510Z M295 480Q300 465 315 465Q330 468 330 485V580Q322 605 295 605Z M352 336Q356 312 380 311V325L354 350Z M446 355Q448 335 470 330L718 282Q713 305 690 310L655 320L565 400L525 403L503 390L480 398L446 382Z M474 535L488 485L492 543H474Z M605 503Q607 488 625 487L657 482Q670 490 662 507L615 517Q604 514 605 503Z M748 506L768 441L775 445L788 495Z M720 365Q723 322 750 328L758 342Z M813 378a20 27 0 1 0 40 0a20 27 0 1 0-40 0Z M948 195L1003 183V205L948 217Z M948 236L1004 224V246L948 257Z M855 171L896 160V167L855 178Z M730 145L760 137V142L730 150Z M650 112L668 107V117L650 121Z M652 250L704 240V247L652 257Z M790 130H800V140L790 143Z M683 188H691V196H683Z M683 214H691V222H683Z M852 205Q858 207 858 233Q853 228 850 226Z M635 424L658 417L652 425Z"/>
                    <g fill="none" stroke="#000" stroke-width="3">
                        <path d="M405 175V220L120 500Q112 530 125 565L225 682M443 150 420 160M545 270 592 262V226M610 95H650V235M720 90 702 250M800 150 940 115M822 185H850M352 350 245 455M397 440 490 428 495 620M525 403 600 430 655 425 718 385Q730 350 720 330M775 268Q820 265 815 300 812 335 770 340M845 205C812 220 820 260 850 262 870 245 860 220 858 210M570 570 575 530 605 500M570 570 655 553V517M705 545 788 530M705 545 710 505 768 441M242 530Q245 570 290 605"/>
                        <ellipse cx="783" cy="242" rx="7" ry="6"/><ellipse cx="900" cy="232" rx="12" ry="9"/>
                    </g>
                    <ellipse cx="768" cy="515" rx="26" ry="15" transform="rotate(-15 768 515)" fill="#171717" stroke="#000" stroke-width="2"/>
                    <path d="m795 570 35-17 50-20 25-3" fill="none" stroke="#171717" stroke-width="24"/>
                    <path d="M848 535v22M875 527l5 20" stroke="#333" stroke-width="2"/>
                    <use href="#screw" x="532" y="135"/><use href="#screw" x="736" y="100"/><use href="#screw" x="1027" y="152"/><use href="#screw" x="1030" y="266"/><use href="#screw" x="787" y="195"/><use href="#screw" x="741" y="251"/><use href="#screw" x="639" y="278"/><use href="#screw" x="537" y="298"/><use href="#screw" x="366" y="283"/><use href="#screw" x="792" y="356"/><use href="#screw" x="799" y="406"/><use href="#screw" x="831" y="498"/><use href="#screw" x="557" y="623"/><use href="#screw" x="291" y="677"/><use href="#screw" x="167" y="477"/><use href="#screw" x="804" y="578"/>
                    <use href="#bolt" x="437" y="110"/><use href="#bolt" x="641" y="75"/><use href="#bolt" x="691" y="168"/><use href="#bolt" x="547" y="252"/><use href="#bolt" x="271" y="258"/><use href="#bolt" x="72" y="452"/><use href="#bolt" x="698" y="330"/><use href="#bolt" x="703" y="378"/><use href="#bolt" x="738" y="472"/><use href="#bolt" x="462" y="597"/><use href="#bolt" x="194" y="650"/>
                    <g fill="#ddd"><circle cx="57" cy="553" r="3"/><circle cx="155" cy="658" r="3"/><circle cx="249" cy="685" r="3"/><circle cx="278" cy="413" r="3"/><circle cx="373" cy="438" r="3"/><circle cx="358" cy="530" r="2"/><circle cx="430" cy="474" r="2"/><circle cx="524" cy="498" r="2"/><circle cx="533" cy="89" r="2"/></g>
                </g>
                <!-- rod ends -->
                <g fill="#111"><circle cx="1091" cy="434" r="5"/><circle cx="1114" cy="440" r="5"/><circle cx="698" cy="621" r="4"/></g>
                <g fill="#222" stroke="#ccc"><circle cx="1092" cy="434" r="1"/><circle cx="1115" cy="440" r="2"/></g>
                <!-- rotor head -->
                <g transform="translate(400 180) scale(.333333)" fill="#202020" stroke="#070707" stroke-width="3" stroke-linejoin="round">
                    <path d="M625 480 634 595 632 620H684L682 590 690 480Z"/>
                    <path d="M598 444 700 415Q722 418 724 438 724 455 715 463L690 475 622 495Q595 500 586 480 582 452 598 444Z"/>
                    <path d="m652 436 10 75-8 80M655 450l12 60h17l8-65-6-5M625 490l15 55 8-5v-55M650 515h20v25h-20zM645 435l20-12" fill="#292929"/>
                    <ellipse cx="606" cy="469" rx="20" ry="25" fill="#2c2c2c"/><ellipse cx="607" cy="470" rx="12" ry="16" fill="#0c0c0c"/>
                    <path d="m612 630 8 50-26 42q-6 22 12 26 18 0 25-15l30-55 1-45zM662 635l35 70q15 15 30 6 10-10 3-28l-26-50-10-30z" fill="#191919"/>
                    <ellipse cx="633" cy="669" rx="10" ry="16"/><path d="m675 640 20 45 12-15-15-35z"/>
                    <rect x="584" y="583" width="30" height="47" rx="11" fill="#303030"/>
                    <path d="m610 602 30-12 50-6 20-14v45l-75 25-22-8z"/>
                    <path d="m667 615 26-10v20l-26 4z" fill="#8b93a2"/>
                    <circle cx="697" cy="579" r="11"/><circle cx="622" cy="630" r="15"/><circle cx="651" cy="631" r="13"/><circle cx="656" cy="632" r="6" fill="#eee"/><circle cx="658" cy="632" r="4"/>
                    <circle cx="716" cy="608" r="19"/><circle cx="718" cy="608" r="12" fill="#ddd"/><circle cx="720" cy="608" r="8"/>
                    <ellipse cx="607" cy="728" rx="8" ry="10" fill="#fff" stroke="#666"/><ellipse cx="710" cy="695" rx="7" ry="10" fill="#fff" stroke="#666"/><circle cx="676" cy="525" r="4" fill="#999"/>
                </g>
                <!-- axis triad -->
                <g stroke-linecap="round">
                    <path d="M408 775V753" stroke="#247b27" stroke-width="4"/><path d="m408 745 4 10h-8z" fill="#249030"/>
                    <path d="m408 775-14 3" stroke="#2024a8" stroke-width="4"/><path d="m385 779 10-5 1 8z" fill="#2831d8"/>
                    <path d="m408 775 12 3" stroke="#8d1717" stroke-width="4"/><path d="m427 779-8-5-1 8z" fill="#d02020"/><circle cx="422" cy="778" r="4" fill="#c41e1e"/>
                </g>
                <g class="axis"><text x="404" y="743" fill="#008000">Y</text><text x="378" y="784" fill="#0000ff">Z</text><text x="425" y="785" fill="#f00">X</text></g>
            </svg>

            <div class="isolate">
                <h2>Isolate</h2>
                <div class="isolate-tools">
                    <button aria-label="Removed components"><svg class="icon"><use href="#ghostpart"/></svg></button><button class="drop" aria-label="Visibility"></button>
                    <i class="line"></i>
                    <button aria-label="Save as display state"><svg class="icon"><use href="#save"/></svg></button>
                    <button class="exit">Exit Isolate</button>
                </div>
            </div>

            <nav class="task-pane" aria-label="Task pane">
                <button class="active" aria-label="Resources"><svg class="icon"><use href="#home"/></svg></button>
                <button aria-label="Design library"><svg class="icon"><use href="#books"/></svg></button>
                <button aria-label="File explorer"><svg class="icon"><use href="#folder"/></svg></button>
                <button aria-label="View palette"><svg class="icon"><use href="#palette"/></svg></button>
                <button aria-label="Appearances"><svg class="icon"><use href="#ball"/></svg></button>
                <button aria-label="Custom properties"><svg class="icon"><use href="#listhead"/></svg></button>
                <button aria-label="Forum"><svg class="icon"><use href="#chat"/></svg></button>
            </nav>
        </section>
    </main>

    <nav class="study-tabs" aria-label="Studies">
        <div class="steps">
            <button aria-label="First"><svg viewBox="0 0 16 16"><path d="M3.500 3v10" stroke="#777" stroke-width="2"/><path d="M12 3v10L6 8z" fill="#777"/></svg></button>
            <button aria-label="Previous"><svg viewBox="0 0 16 16"><path d="M11 3v10L5 8z" fill="#777"/></svg></button>
            <button aria-label="Next"><svg viewBox="0 0 16 16"><path d="M5 3v10l6-5z" fill="#777"/></svg></button>
            <button aria-label="Last"><svg viewBox="0 0 16 16"><path d="M12.500 3v10" stroke="#777" stroke-width="2"/><path d="M4 3v10l6-5z" fill="#777"/></svg></button>
        </div>
        <button class="tab active">Model</button><button class="tab">3D Views</button><button class="tab study">Motion Study 2</button>
    </nav>

    <footer class="status">
        <span>SOLIDWORKS Premium 2019 Beta 3</span>
        <span class="state">Under Defined</span>
        <span class="mode">Editing Assembly</span>
        <button class="units">Custom <i></i></button>
        <svg class="icon tag"><use href="#tag"/></svg>
        <svg class="resize" viewBox="0 0 10 10"><path d="M8 1h2v2H8zM4 5h2v2H4zM8 5h2v2H8zM0 9h2v1H0zM4 9h2v1H4zM8 9h2v1H8z" fill="#aaa"/></svg>
    </footer>
</body>
</html>
```
FILE: styles.css
```css
* {
    box-sizing: border-box;
}

body {
    margin: 0;
    height: 100vh;
    display: flex;
    flex-direction: column;
    border: 1px solid #35587c;
    border-bottom-width: 2px;
    padding-top: 7px;
    background-color: #fff;
    color: #000;
    font-family: "Open Sans", "Noto Sans", sans-serif;
    font-size: 11px;
    overflow: hidden;
}

button {
    font: inherit;
    color: inherit;
    background: none;
    border: none;
    padding: 0;
    flex: none;
    display: flex;
    align-items: center;
    justify-content: center;
}

.icon-defs {
    position: absolute;
    width: 0;
    height: 0;
}

.icon {
    width: 20px;
    height: 20px;
    flex: none;
    display: block;
}

/* small down arrow used next to icons */
.drop {
    width: 9px;
    height: 20px;
}

.drop::after,
.has-drop::after {
    content: "";
    border: 3px solid transparent;
    border-top-color: #333;
    border-bottom: none;
}

.drop.faded::after {
    border-top-color: #999;
}

/* Title bar */
.titlebar {
    flex: none;
    display: flex;
    height: 31px;
    padding-left: 10px;
    background-color: #e4e4e4;
    border-bottom: 1px solid #808080;
    position: relative;
    z-index: 2;
}

.brand {
    width: 145px;
    height: 35px;
    flex: none;
    display: flex;
    align-items: center;
    gap: 3px;
    padding: 0 4px;
    border: 1px solid #999;
    border-top: none;
    background: linear-gradient(150deg, #fff 40%, #d5d5d5);
    color: #da291c;
    text-decoration: none;
}

.brand-mark {
    width: 28px;
    height: 28px;
    flex: none;
}

.brand-name {
    padding-top: 3px;
    font-size: 17px;
    font-style: italic;
}

.menubar {
    width: 360px;
    flex: none;
    display: flex;
    align-items: center;
    gap: 16px;
    padding-left: 28px;
    background-color: #f7f7f7;
    border-right: 2px solid #a0a0a0;
    font-family: "Noto Sans", sans-serif;
}

.menubar .pin {
    margin-left: 8px;
}

.menubar .icon {
    width: 16px;
    height: 16px;
}

.quickbar {
    flex: 1;
    display: flex;
    align-items: center;
    gap: 5px;
    padding: 0 4px 0 16px;
}

.home-button {
    position: relative;
}

.dot {
    position: absolute;
    top: 0;
    right: 0;
    width: 7px;
    height: 7px;
    border-radius: 50%;
    background-color: #f22;
}

.select-tool {
    display: flex;
    width: 38px;
    height: 26px;
    margin: 0 -2px;
    border: 1px solid #888;
}

.select-tool button:first-child {
    width: 25px;
    height: 24px;
    background-color: #adadad;
    border-right: 1px solid #888;
}

.select-tool .drop {
    width: 11px;
    height: 24px;
}

.search-text {
    width: 30px;
    padding-right: 2px;
}

.help {
    width: 20px;
    font-size: 18px;
    font-weight: 700;
    color: #444;
}

.window-buttons {
    display: flex;
    gap: 6px;
    margin-left: auto;
}

/* Ribbon */
.ribbon {
    flex: none;
    display: grid;
    grid-template-columns: 74px 74px 38px 69px 106px 58px 74px 79px 59px 62px 51px 60px 61px 63px 64px 60px 56px;
    height: 87px;
    padding: 6px 0 2px 1px;
    background-color: #f7f7f7;
    border-bottom: 1px solid #808080;
}

.ribbon button {
    flex-direction: column;
    justify-content: flex-start;
    padding-top: 12px;
    line-height: 13px;
    text-align: center;
    white-space: nowrap;
}

.ribbon button.has-drop {
    padding-top: 5px;
}

.ribbon .has-drop::after {
    margin-top: auto;
    margin-bottom: 9px;
}

.ribbon button.group-end {
    border-right: 1px solid #c0c0c0;
}

.ribbon button:disabled {
    color: #b0b0b0;
}

/* Command tabs and heads-up toolbar */
.tab-row {
    flex: none;
    display: flex;
    align-items: flex-start;
    height: 22px;
    position: relative;
    z-index: 1;
}

.command-tabs {
    display: flex;
    border-bottom: 1px solid #808080;
    background-color: #f7f7f7;
}

.command-tabs button {
    height: 21px;
    min-width: 56px;
    padding: 0 5px;
    background-color: #d4d4d4;
    border-right: 1px solid #808080;
    font-size: 12px;
}

.command-tabs .active {
    width: 68px;
    background-color: #f7f7f7;
    font-size: 11px;
    font-weight: 700;
    color: #333;
}

.view-toolbar {
    display: flex;
    gap: 6px;
    margin-left: 144px;
    padding-top: 5px;
    opacity: 0.8;
}

.view-toolbar .drop {
    width: 8px;
}

.view-toolbar .drop::after {
    border-top-color: #999;
}

.doc-buttons {
    display: flex;
    gap: 6px;
    margin-left: auto;
    padding: 5px 10px 0 0;
}

/* Manager panel */
.workspace {
    flex: 1;
    display: flex;
    min-height: 0;
}

.manager {
    width: 368px;
    flex: none;
    display: flex;
    flex-direction: column;
    background-color: #f7f7f7;
    border-right: 1px solid #808080;
    position: relative;
    z-index: 1;
}

.grip {
    height: 20px;
    margin-right: 3px;
    border-bottom: 1px solid #c4c4c4;
    border-top: 1px solid #7c9aa4;
    display: flex;
    justify-content: center;
    align-items: center;
    padding-top: 5px;
}

.grip i,
.splitter i {
    width: 6px;
    height: 6px;
    border: 1px solid #999;
    border-radius: 50%;
    background-color: #ddd;
}

.manager-tabs {
    display: flex;
    margin: 4px 3px 0 2px;
}

.manager-tabs button {
    width: 40px;
    height: 26px;
    background-color: #d4d4d4;
    border: 1px solid #808080;
    border-left: none;
}

.manager-tabs button.active {
    background-color: #f7f7f7;
    border-bottom: none;
}

.manager-tabs button.more {
    width: 20px;
    margin-left: auto;
    background: none;
    border: none;
}

.filter {
    flex: none;
    display: flex;
    align-items: center;
    height: 26px;
    margin: 0 5px;
    border: 1px solid #b8b8b8;
}

.filter .drop {
    width: 6px;
}

.filter input {
    flex: 1;
    border: none;
    background: none;
}

.tree-area {
    flex: 1;
    display: flex;
    min-height: 0;
    margin-right: 2px;
}

.tree {
    flex: 1;
    min-width: 0;
    margin: 0;
    padding: 0;
    list-style: none;
    overflow: hidden;
    font-family: "Noto Sans", sans-serif;
}

.tree li {
    display: flex;
    align-items: center;
    gap: 4px;
    height: 22px;
    padding-left: 72px;
    white-space: nowrap;
    color: #1f6e96;
}

.tree li span {
    color: #000;
}

.tree .off {
    color: #888;
    opacity: 0.6;
}

.tree .off span {
    color: #444;
}

.tree .level-1 {
    padding-left: 28px;
}

.tree .level-0 {
    padding-left: 5px;
}

.tree .level-1 .caret,
.tree .level-0 .caret {
    margin-right: 5px;
}

.tree .folder-row {
    padding-left: 52px;
}

.tree .selected {
    display: flex;
    align-items: center;
    gap: 4px;
    height: 22px;
    margin-left: 2px;
    padding: 0 3px 0 1px;
    background-color: #a6c8e4;
    border: 1px solid #3787bd;
}

.tree .rollback {
    height: 4px;
    background-color: #398dc4;
}

.caret {
    width: 12px;
    flex: none;
}

.caret::after {
    content: "";
    display: block;
    width: 0;
    margin-left: 4px;
    border: 4px solid transparent;
    border-left-color: #555;
    border-right: none;
}

.caret.open::after {
    margin-left: 2px;
    border: 4px solid transparent;
    border-top-color: #555;
    border-bottom: none;
}

.vscroll {
    width: 16px;
    display: flex;
    flex-direction: column;
    background-color: #f0f0f0;
}

.vthumb {
    height: 110px;
    margin-top: auto;
    margin-bottom: 18px;
    background-color: #cdcdcd;
}

.scroll-arrow {
    width: 16px;
    height: 16px;
    flex: none;
}

.hscroll {
    flex: none;
    display: flex;
    height: 21px;
    padding-left: 2px;
    border-bottom: 1px solid #c4c4c4;
    margin-right: 18px;
}

.htrack {
    flex: 1;
    height: 16px;
    background-color: #f0f0f0;
}

.hthumb {
    display: block;
    width: 79%;
    height: 16px;
    background-color: #cdcdcd;
}

.splitter {
    position: absolute;
    top: 312px;
    right: -9px;
    width: 9px;
    height: 39px;
    background-color: #f7f7f7;
    border: 1px solid #808080;
    border-left: none;
}

/* Popup menus */
.popup-tools,
.context-menu {
    position: absolute;
    left: 169px;
    width: 194px;
    background-color: #f7f7f7;
    border: 1px solid #808080;
}

.popup-tools {
    top: 377px;
    height: 98px;
    padding: 8px;
    display: flex;
    flex-direction: column;
    gap: 10px;
}

.popup-tools div {
    display: flex;
    gap: 10px;
}

.context-menu {
    top: 485px;
    padding: 3px 3px 4px;
    font-family: "Noto Sans", sans-serif;
}

.context-menu button {
    width: 182px;
    height: 24px;
    padding: 0 2px 2px 33px;
    justify-content: space-between;
    border: 1px solid transparent;
}

.context-menu button.hover {
    background-color: #fff;
    border-color: #aaa;
}

.context-menu hr {
    margin: 1px -3px 0 28px;
    border: none;
    border-top: 1px solid #c0c0c0;
}

.context-menu u {
    text-underline-offset: 2px;
}

.pointer {
    position: absolute;
    left: 131px;
    top: 36px;
    width: 14px;
    height: 20px;
}

/* Graphics area */
.viewport {
    flex: 1;
    position: relative;
    min-width: 0;
    background-color: #fff;
}

.model {
    display: block;
    width: 100%;
    height: 100%;
}

.axis {
    font-family: "Liberation Sans", sans-serif;
    font-size: 11px;
}

.isolate {
    position: absolute;
    left: 35px;
    top: 42px;
    width: 169px;
    background-color: #f0f0f0;
    border: 1px solid #515c69;
}

.isolate h2 {
    margin: 0;
    padding: 0 7px;
    line-height: 28px;
    height: 29px;
    font-size: 11px;
    font-weight: 400;
    color: #fff;
    background-color: #515c69;
}

.isolate-tools {
    display: flex;
    align-items: center;
    height: 34px;
    padding: 0 3px 4px 7px;
}

.isolate-tools .drop {
    margin-left: 5px;
}

.isolate-tools .line {
    width: 1px;
    height: 22px;
    margin: 0 8px 0 5px;
    background-color: #888;
}

.isolate-tools .exit {
    width: 82px;
    height: 24px;
    margin-left: auto;
    padding-bottom: 1px;
    background-color: #e1e1e1;
    border: 2px solid #0078d7;
}

.task-pane {
    position: absolute;
    top: 53px;
    right: 0;
    display: flex;
    flex-direction: column;
    border: 1px solid #808080;
    border-right: none;
}

.task-pane button {
    width: 25px;
    height: 24px;
    background-color: #d4d4d4;
    border-bottom: 1px solid #808080;
}

.task-pane button:last-child {
    border-bottom: none;
}

.task-pane .active {
    background-color: #f7f7f7;
}

/* Bottom tabs and status bar */
.study-tabs {
    flex: none;
    display: flex;
    height: 17px;
    padding-left: 27px;
    background-color: #f7f7f7;
    border-top: 1px solid #808080;
    border-bottom: 1px solid #808080;
}

.steps {
    display: flex;
    background-color: #aaa;
}

.steps button {
    width: 16px;
    height: 15px;
    border-right: 1px solid #888;
}

.study-tabs .tab {
    padding: 0 10px 2px;
    background-color: #d4d4d4;
    border-right: 1px solid #808080;
    height: 15px;
}

.study-tabs .tab.active {
    padding-left: 13px;
    background-color: #f7f7f7;
    font-weight: 700;
}

.study-tabs .tab.study {
    padding-right: 17px;
}

.status {
    flex: none;
    display: flex;
    align-items: center;
    height: 17px;
    padding-left: 1px;
    background-color: #e4e4e4;
}

.state {
    margin-left: auto;
    padding: 0 6px;
    font-family: "Noto Sans", sans-serif;
}

.mode {
    margin-left: 8px;
    padding: 0 6px 0 3px;
    border-left: 1px solid #ccc;
    border-right: 1px solid #ccc;
    font-family: "Noto Sans", sans-serif;
}

.units {
    width: 64px;
    margin-left: 44px;
    justify-content: space-between;
}

.units i {
    border: 3px solid transparent;
    border-bottom-color: #444;
    border-top: none;
}

.status .tag {
    margin-left: 65px;
    width: 18px;
    height: 16px;
}

.resize {
    width: 10px;
    height: 10px;
    margin: 4px 1px 0 11px;
}
```
